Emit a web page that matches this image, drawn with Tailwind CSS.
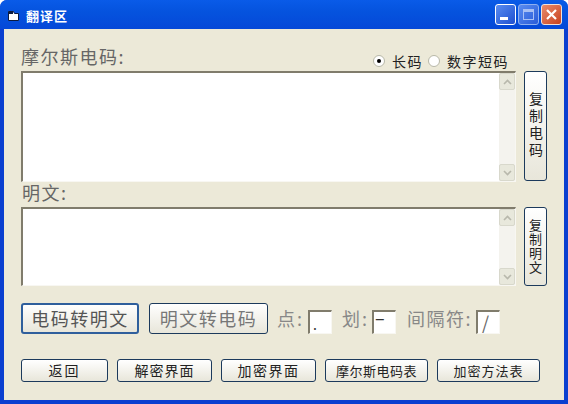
<!DOCTYPE html>
<html lang="zh-CN">
<head>
    <meta charset="UTF-8" />
    <title>翻译区</title>
    <script src="https://cdn.jsdelivr.net/npm/@tailwindcss/browser@4"></script>
</head>
<body class="m-0 overflow-hidden font-['Noto_Sans_CJK_SC','Liberation_Sans',sans-serif]">
    <div class="flex h-[404px] w-[568px] flex-col rounded-t-[7px] bg-[#0a3fd0]">
        <!-- title bar -->
        <div class="flex h-[29px] items-center rounded-t-[7px] bg-gradient-to-b from-[#0a5be8] via-[#0553de] via-40% to-[#0548d8] pl-[8px] pr-[6px]">
            <svg class="mt-[2px] h-[10px] w-[11px]" viewBox="0 0 11 10">
                <path d="M0.5 0.5h5l1 2h4v7h-10z" fill="#fff" stroke="#0a1a40" stroke-width="1"/>
                <path d="M1 1h4v2h-4z" fill="#0a1a40"/>
            </svg>
            <span class="ml-[7px] mt-[2px] text-[13px] font-bold tracking-[1px] text-white">翻译区</span>
            <div class="ml-auto flex gap-[2px]">
                <div class="flex h-[21px] w-[21px] items-end rounded-[3px] border border-white bg-gradient-to-br from-[#5a8cf0] to-[#1f4fd0] pb-[4px] pl-[4px]">
                    <div class="h-[3px] w-[8px] bg-white"></div>
                </div>
                <div class="flex h-[21px] w-[21px] items-center justify-center rounded-[3px] border border-[#8fb0f0] bg-gradient-to-br from-[#5a8cf0] to-[#2a5bd8]">
                    <div class="h-[11px] w-[11px] border border-[#a8c0f4] border-t-[3px]"></div>
                </div>
                <div class="flex h-[21px] w-[21px] items-center justify-center rounded-[3px] border border-[#f0e0d8] bg-gradient-to-br from-[#e88a6a] to-[#c8401c]">
                    <svg class="h-[13px] w-[13px]" viewBox="0 0 13 13"><path d="M2 2l9 9M11 2l-9 9" stroke="#fff" stroke-width="2.2"/></svg>
                </div>
            </div>
        </div>

        <!-- client area -->
        <div class="mx-[4px] mb-[4px] flex-1 bg-[#ece9d8] px-[17px] pt-[15px] text-[#333]">
            <div class="flex h-[27px] w-[496px] items-start justify-between pr-[8px]">
                <span class="h-[26px] text-[18px] leading-[24px] tracking-[1.5px] text-[#666]">摩尔斯电码:</span>
                <div class="mt-[9px] flex h-[16px] items-center text-[14px] leading-[16px] tracking-[1.5px] text-[#222]">
                    <span class="flex h-[12px] w-[12px] items-center justify-center rounded-full border border-[#b8b8a8] bg-white">
                        <span class="h-[4px] w-[4px] rounded-full bg-black"></span>
                    </span>
                    <span class="ml-[7px]">长码</span>
                    <span class="ml-[5px] h-[12px] w-[12px] rounded-full border border-[#b8b8a8] bg-white"></span>
                    <span class="ml-[7px]">数字短码</span>
                </div>
            </div>

            <div class="flex h-[111px] gap-[8px]">
                <div class="flex w-[496px] border-b border-l-2 border-r border-t-2 border-b-[#f8f7f2] border-l-[#807c6c] border-r-[#f8f7f2] border-t-[#807c6c] bg-white">
                    <div class="flex-1"></div>
                    <div class="flex w-[16px] flex-col justify-between bg-[#f4f3ee]">
                        <div class="flex h-[17px] items-center justify-center rounded-[2px] border border-[#d8d8cc] bg-[#e8e8dc]"><svg class="h-[6px] w-[9px]" viewBox="0 0 9 6"><path d="M1 5l3.5-3.5L8 5" fill="none" stroke="#b8b8ac" stroke-width="1.6"/></svg></div>
                        <div class="flex h-[17px] items-center justify-center rounded-[2px] border border-[#d8d8cc] bg-[#e8e8dc]"><svg class="h-[6px] w-[9px]" viewBox="0 0 9 6"><path d="M1 1l3.5 3.5L8 1" fill="none" stroke="#b8b8ac" stroke-width="1.6"/></svg></div>
                    </div>
                </div>
                <button class="h-[110px] w-[23px] rounded-[3px] border border-[#1c3a5c] bg-gradient-to-b from-white to-[#e8e6da] text-[14px] leading-[21px] tracking-[3px] text-[#222] [writing-mode:vertical-rl]">复制电码</button>
            </div>

            <div class="h-[25px] pl-[1px] text-[18px] leading-[20px] tracking-[1.5px] text-[#666]">明文:</div>

            <div class="flex h-[79px] gap-[8px]">
                <div class="flex w-[496px] border-b border-l-2 border-r border-t-2 border-b-[#f8f7f2] border-l-[#807c6c] border-r-[#f8f7f2] border-t-[#807c6c] bg-white">
                    <div class="flex-1"></div>
                    <div class="flex w-[16px] flex-col justify-between bg-[#f4f3ee]">
                        <div class="flex h-[17px] items-center justify-center rounded-[2px] border border-[#d8d8cc] bg-[#e8e8dc]"><svg class="h-[6px] w-[9px]" viewBox="0 0 9 6"><path d="M1 5l3.5-3.5L8 5" fill="none" stroke="#b8b8ac" stroke-width="1.6"/></svg></div>
                        <div class="flex h-[17px] items-center justify-center rounded-[2px] border border-[#d8d8cc] bg-[#e8e8dc]"><svg class="h-[6px] w-[9px]" viewBox="0 0 9 6"><path d="M1 1l3.5 3.5L8 1" fill="none" stroke="#b8b8ac" stroke-width="1.6"/></svg></div>
                    </div>
                </div>
                <button class="h-[79px] w-[23px] rounded-[3px] border border-[#1c3a5c] bg-gradient-to-b from-white to-[#e8e6da] text-[13px] leading-[21px] tracking-[1px] text-[#222] [writing-mode:vertical-rl]">复制明文</button>
            </div>

            <!-- convert row -->
            <div class="mt-[17px] flex h-[31px] items-start whitespace-nowrap text-[18px] tracking-[1.5px] text-[#555]">
                <button class="h-[31px] w-[118px] rounded-[3px] border-2 border-[#2f5f9c] bg-gradient-to-b from-white to-[#e8e6da] leading-[25px] tracking-[1.5px]">电码转明文</button>
                <button class="ml-[10px] h-[31px] w-[119px] rounded-[3px] border border-[#1c3a5c] bg-gradient-to-b from-white to-[#e8e6da] leading-[27px] tracking-[1.5px] text-[#777]">明文转电码</button>
                <span class="ml-[9px] w-[31px] leading-[31px] tracking-[2px] text-[#888]">点:</span>
                <div class="mt-[7px] h-[24px] w-[24px] border-b border-l-2 border-r border-t-2 border-b-[#f8f7f2] border-l-[#807c6c] border-r-[#f8f7f2] border-t-[#807c6c] bg-white pl-[3px] text-[14px] leading-[24px] text-[#333]">.</div>
                <span class="ml-[10px] w-[30px] leading-[31px] tracking-[2px] text-[#888]">划:</span>
                <div class="mt-[7px] h-[24px] w-[24px] border-b border-l-2 border-r border-t-2 border-b-[#f8f7f2] border-l-[#807c6c] border-r-[#f8f7f2] border-t-[#807c6c] bg-white pl-[1px] text-[18px] leading-[11px] text-[#333]">–</div>
                <span class="ml-[11px] w-[69px] leading-[31px] tracking-[1.5px] text-[#888]">间隔符:</span>
                <div class="mt-[7px] h-[24px] w-[24px] border-b border-l-2 border-r border-t-2 border-b-[#f8f7f2] border-l-[#807c6c] border-r-[#f8f7f2] border-t-[#807c6c] bg-white pl-[4px] text-[18px] leading-[21px] text-[#666]">/</div>
            </div>

            <!-- bottom buttons -->
            <div class="mt-[25px] flex h-[23px] gap-[9px] text-[14px] leading-[21px] text-[#222]">
                <button class="w-[87px] rounded-[3px] border border-[#1c3a5c] bg-gradient-to-b from-white to-[#e8e6da] tracking-[2px]">返回</button>
                <button class="w-[95px] rounded-[3px] border border-[#1c3a5c] bg-gradient-to-b from-white to-[#e8e6da] tracking-[1px]">解密界面</button>
                <button class="w-[95px] rounded-[3px] border border-[#1c3a5c] bg-gradient-to-b from-white to-[#e8e6da] tracking-[1.5px]">加密界面</button>
                <button class="w-[103px] rounded-[3px] border border-[#1c3a5c] bg-gradient-to-b from-white to-[#e8e6da] text-[13px] tracking-[0.5px]">摩尔斯电码表</button>
                <button class="w-[103px] rounded-[3px] border border-[#1c3a5c] bg-gradient-to-b from-white to-[#e8e6da] text-[13px] tracking-[1px]">加密方法表</button>
            </div>
        </div>
    </div>
</body>
</html>
